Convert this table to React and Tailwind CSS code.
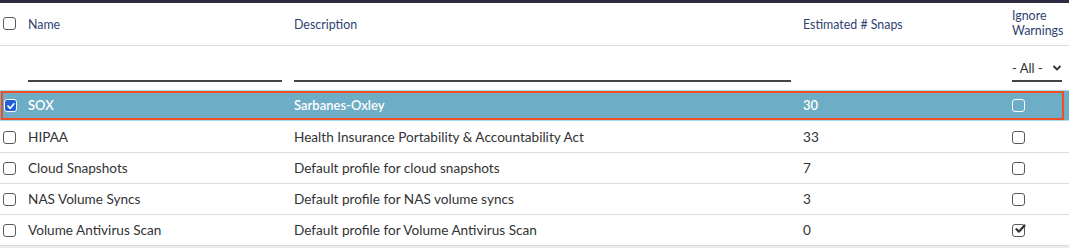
import React from "react";

const rows = [
  { name: "HIPAA", desc: "Health Insurance Portability & Accountability Act", snaps: "33", ign: false },
  { name: "Cloud Snapshots", desc: "Default profile for cloud snapshots", snaps: "7", ign: false },
  { name: "NAS Volume Syncs", desc: "Default profile for NAS volume syncs", snaps: "3", ign: false },
  { name: "Volume Antivirus Scan", desc: "Default profile for Volume Antivirus Scan", snaps: "0", ign: true },
];

function Box({ checked }) {
  return (
    <div className="w-[13px] h-[13px] rounded-[3px] border border-[#5a5a5a] bg-white flex items-center justify-center">
      {checked && (
        <svg width="12" height="12" viewBox="0 0 12 12" className="-mt-[2px] -mr-[2px]">
          <path d="M2.5 6.2 L5 8.6 L10.5 2.5" fill="none" stroke="#333" strokeWidth="2.2" strokeLinecap="round" strokeLinejoin="round" />
        </svg>
      )}
    </div>
  );
}

export default function App() {
  return (
    <div className="w-[1069px] h-[248px] overflow-hidden bg-white text-[13.6px] text-[#333]" style={{ fontFamily: "Lato, 'Open Sans', sans-serif" }}>
      <div className="h-[3px] bg-[#2c2b42]" />
      <div className="flex h-[43px] border-b border-[#dcdcdc] text-[#2e3f72] text-[12.4px]">
        <div className="w-[28px] pl-[3px] pt-[14px]">
          <Box />
        </div>
        <div className="w-[266px] pt-[13px]">Name</div>
        <div className="w-[509px] pt-[13px]">Description</div>
        <div className="w-[209px] pt-[13px]">Estimated # Snaps</div>
        <div className="flex-1 pt-[5px] leading-[15px]">Ignore<br />Warnings</div>
      </div>
      <div className="flex h-[44px] items-end pb-[8px]">
        <div className="w-[28px]" />
        <div className="w-[266px] pr-[12px]"><div className="h-[2px] bg-[#444]" /></div>
        <div className="w-[509px] pr-[12px]"><div className="h-[2px] bg-[#444]" /></div>
        <div className="w-[209px]" />
        <div className="flex-1">
          <div className="w-[50px] border-b-2 border-[#444] flex items-center justify-between pb-[2px] text-[#333] text-[13px]">
            <span>- All -</span>
            <svg width="10" height="8" viewBox="0 0 10 8"><path d="M1.5 2 L5 5.5 L8.5 2" fill="none" stroke="#333" strokeWidth="1.8" /></svg>
          </div>
        </div>
      </div>
      <div className="h-[31px] bg-[#6eadc6] border-y border-[#a9dcee] flex">
        <div className="flex-1 mr-[5px] ml-[1px] border-2 border-[#f04e23] flex items-center text-white font-semibold text-[13px]">
          <div className="w-[25px] pl-[1px]">
            <div className="w-[13px] h-[13px] rounded-[3px] bg-[#1f5fd6] border border-white flex items-center justify-center">
              <svg width="10" height="10" viewBox="0 0 10 10"><path d="M2 5.2 L4.2 7.3 L8 2.8" fill="none" stroke="white" strokeWidth="1.7" strokeLinecap="round" strokeLinejoin="round" /></svg>
            </div>
          </div>
          <div className="w-[266px]">SOX</div>
          <div className="w-[509px]">Sarbanes-Oxley</div>
          <div className="w-[209px]">30</div>
          <div className="flex-1">
            <div className="w-[13px] h-[13px] rounded-[3px] border border-white" />
          </div>
        </div>
      </div>
      <div className="mt-[1px]">
        {rows.map((r) => (
          <div key={r.name} className="h-[31px] border-b border-[#dcdcdc] flex items-center">
            <div className="w-[28px] pl-[3px]"><Box /></div>
            <div className="w-[266px]">{r.name}</div>
            <div className="w-[509px]">{r.desc}</div>
            <div className="w-[209px]">{r.snaps}</div>
            <div className="flex-1"><Box checked={r.ign} /></div>
          </div>
        ))}
      </div>
      <div className="h-[3px] bg-[#ececec]" />
    </div>
  );
}
